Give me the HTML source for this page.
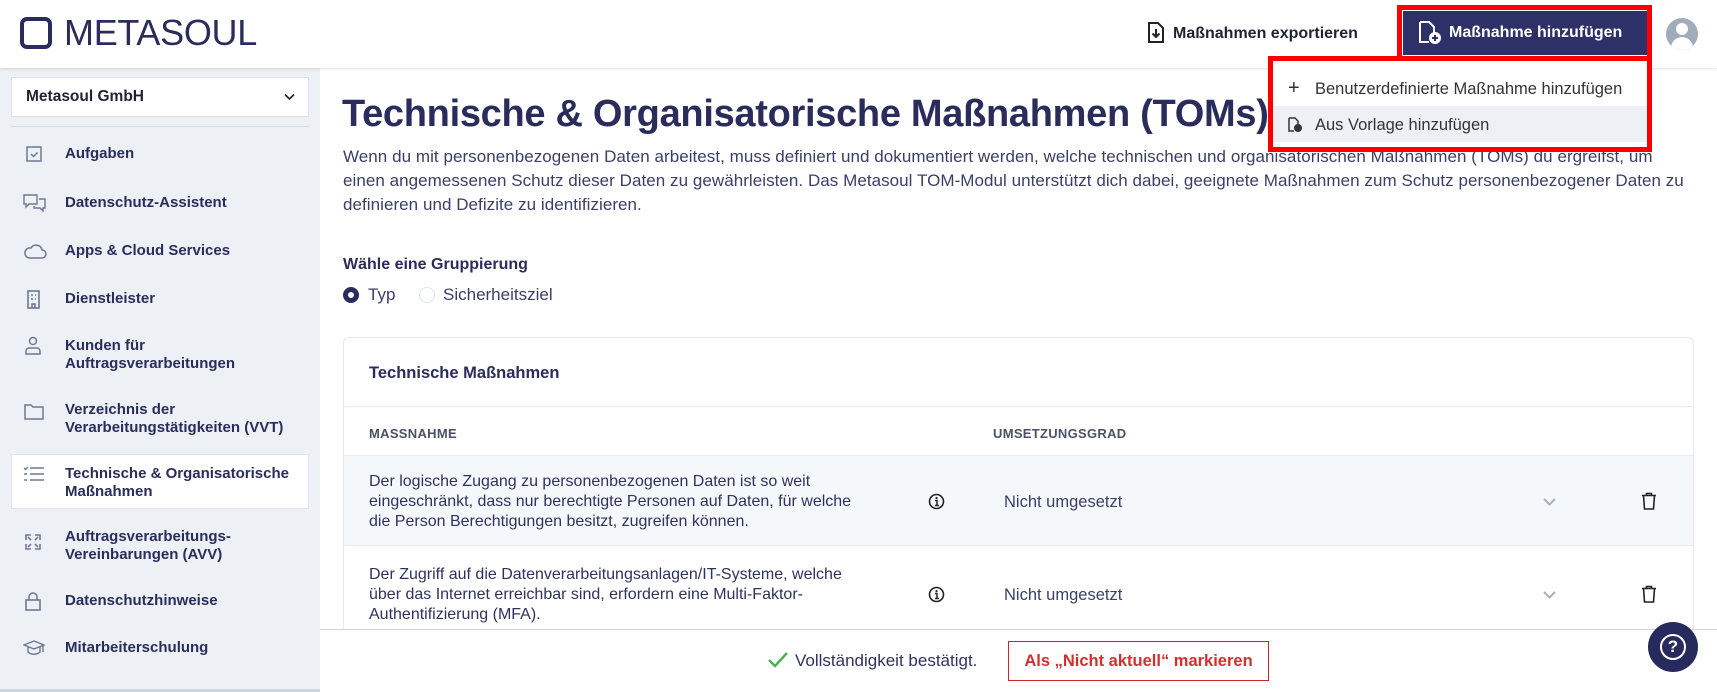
<!DOCTYPE html>
<html><head><meta charset="utf-8"><style>
*{box-sizing:border-box;margin:0;padding:0}
html,body{width:1717px;height:692px;overflow:hidden}
body{position:relative;background:#fff;font-family:"Liberation Sans",sans-serif;color:#2a2d5c}
.a{position:absolute;white-space:nowrap}
.b{font-weight:bold}
.side{position:absolute;left:0;top:68px;width:320px;height:624px;background:#edf1f6}
.nav{position:absolute;left:65px;font-size:15px;font-weight:bold;line-height:18px;color:#2a2d5c}
.ic{position:absolute;left:23px}
</style></head><body>
<!-- header -->
<div class="a" style="left:0;top:0;width:1717px;height:68px;background:#fff;box-shadow:0 1px 3px rgba(0,0,0,.12);z-index:2"></div>
<div class="a" style="left:20px;top:17px;width:32px;height:32px;border:4px solid #2a2d5c;border-radius:7px;z-index:3"></div>
<div class="a" style="left:64px;top:13px;font-size:36px;line-height:40px;color:#2a2d5c;z-index:3;letter-spacing:-0.3px">METASOUL</div>
<svg class="a" style="left:1147px;top:22px;z-index:3" width="18" height="21" viewBox="0 0 18 21"><path d="M2 1h9l5 5v14H2z" fill="none" stroke="#222" stroke-width="2"/><path d="M9 7v8M5.5 11.5L9 15l3.5-3.5" fill="none" stroke="#222" stroke-width="2"/></svg>
<div class="a b" style="left:1173px;top:24px;font-size:16px;line-height:20px;color:#1f2233;z-index:3">Maßnahmen exportieren</div>
<div class="a" style="left:1397px;top:5px;width:255px;height:56px;border:5px solid #f00;z-index:3;background:#fff"></div>
<div class="a" style="left:1403px;top:11px;width:244px;height:44px;background:#2e3167;z-index:4"></div>
<svg class="a" style="left:1418px;top:21px;z-index:5" width="26" height="24" viewBox="0 0 26 24"><path d="M2 1h9l5 5v6M11 21H2V1" fill="none" stroke="#fff" stroke-width="2"/><circle cx="17" cy="17" r="6" fill="#fff"/><path d="M17 14v6M14 17h6" stroke="#2e3167" stroke-width="2"/></svg>
<div class="a b" style="left:1449px;top:23px;font-size:16px;line-height:20px;color:#fff;z-index:5">Maßnahme hinzufügen</div>
<div class="a" style="left:1666px;top:18px;width:32px;height:32px;border-radius:50%;background:#a2abba;z-index:3;overflow:hidden">
 <div class="a" style="left:10px;top:5px;width:12px;height:12px;border-radius:50%;background:#fff"></div>
 <div class="a" style="left:5px;top:19px;width:22px;height:16px;border-radius:11px 11px 0 0;background:#fff"></div>
</div>
<!-- dropdown -->
<div class="a" style="left:1268px;top:56px;width:384px;height:96px;border:5px solid #f00;background:#fff;z-index:3"></div>
<div class="a" style="left:1273px;top:106px;width:374px;height:36px;background:#edf1f5;z-index:4"></div>
<div class="a" style="left:1288px;top:76px;font-size:20px;line-height:24px;color:#333;z-index:5">+</div>
<div class="a" style="left:1315px;top:79px;font-size:16.5px;line-height:20px;color:#333;z-index:5">Benutzerdefinierte Maßnahme hinzufügen</div>
<svg class="a" style="left:1287px;top:117px;z-index:5" width="16" height="16" viewBox="0 0 16 16"><path d="M2 1h6l3 3v3M7 14H2V1" fill="none" stroke="#333" stroke-width="1.5"/><circle cx="11" cy="11" r="4" fill="#333"/></svg>
<div class="a" style="left:1315px;top:115px;font-size:16.5px;line-height:20px;color:#333;z-index:5">Aus Vorlage hinzufügen</div>

<!-- sidebar -->
<div class="side"></div>
<div class="a" style="left:11px;top:77px;width:298px;height:40px;background:#fff;border:1px solid #dde3ea"></div>
<div class="a b" style="left:26px;top:88px;font-size:15.5px;line-height:18px;color:#1f2233">Metasoul GmbH</div>
<svg class="a" style="left:284px;top:93px" width="11" height="8" viewBox="0 0 11 8"><path d="M1 1.5l4.5 4.5 4.5-4.5" fill="none" stroke="#222" stroke-width="1.6"/></svg>
<div class="a" style="left:11px;top:126px;width:298px;height:1px;background:#d7dde5"></div>
<div class="a" style="left:11px;top:454px;width:298px;height:55px;background:#fff;border:1px solid #e0e5eb"></div>

<svg class="ic" style="top:146px" width="20" height="18" viewBox="0 0 20 18"><rect x="4" y="1" width="14" height="14" fill="none" stroke="#6f7890" stroke-width="1.5"/><path d="M8 8l2.5 2.5 4-4" fill="none" stroke="#6f7890" stroke-width="1.5"/></svg>
<div class="nav" style="top:145px">Aufgaben</div>
<svg class="ic" style="top:194px" width="24" height="18" viewBox="0 0 24 18"><path d="M1 1h13v9H6l-3 3v-3H1z M16 5h6v9h-2v3l-3-3h-6v-2" fill="none" stroke="#6f7890" stroke-width="1.4"/></svg>
<div class="nav" style="top:194px">Datenschutz-Assistent</div>
<svg class="ic" style="top:243px" width="24" height="16" viewBox="0 0 24 16"><path d="M6 15h13a4 4 0 0 0 0-8 6 6 0 0 0-11-2 5 5 0 0 0-2 10z" fill="none" stroke="#6f7890" stroke-width="1.5"/></svg>
<div class="nav" style="top:242px">Apps &amp; Cloud Services</div>
<svg class="ic" style="top:290px" width="20" height="20" viewBox="0 0 20 20"><rect x="5" y="1" width="11" height="17" fill="none" stroke="#6f7890" stroke-width="1.6"/><path d="M8 5h2M12 5h1M8 9h2M12 9h1M9 18v-4h3v4" stroke="#6f7890" stroke-width="1.6" fill="none"/></svg>
<div class="nav" style="top:290px">Dienstleister</div>
<svg class="ic" style="top:336px" width="20" height="20" viewBox="0 0 20 20"><circle cx="10" cy="5" r="3.5" fill="none" stroke="#6f7890" stroke-width="1.5"/><path d="M3 18v-3a3 3 0 0 1 3-3h8a3 3 0 0 1 3 3v3z" fill="none" stroke="#6f7890" stroke-width="1.5"/></svg>
<div class="nav" style="top:337px">Kunden für<br>Auftragsverarbeitungen</div>
<svg class="ic" style="top:403px" width="22" height="18" viewBox="0 0 22 18"><path d="M2 2h6l2 2h10v12H2z" fill="none" stroke="#6f7890" stroke-width="1.5"/></svg>
<div class="nav" style="top:401px">Verzeichnis der<br>Verarbeitungstätigkeiten (VVT)</div>
<svg class="ic" style="top:465px" width="22" height="18" viewBox="0 0 22 18"><path d="M1 3l1.5 1.5L5 2M7 3h14M1 9h3M7 9h14M1 15h3M7 15h14" fill="none" stroke="#6f7890" stroke-width="1.4"/></svg>
<div class="nav" style="top:465px">Technische &amp; Organisatorische<br>Maßnahmen</div>
<svg class="ic" style="top:532px" width="20" height="20" viewBox="0 0 20 20"><path d="M3 8V3h5M12 3h5v5M17 12v5h-5M8 17H3v-5M5 5l3 3M15 5l-3 3M15 15l-3-3M5 15l3-3" fill="none" stroke="#6f7890" stroke-width="1.6"/></svg>
<div class="nav" style="top:528px">Auftragsverarbeitungs-<br>Vereinbarungen (AVV)</div>
<svg class="ic" style="top:591px" width="20" height="20" viewBox="0 0 20 20"><rect x="3" y="9" width="14" height="10" fill="none" stroke="#6f7890" stroke-width="1.6"/><path d="M6 9V6a4 4 0 0 1 8 0v3" fill="none" stroke="#6f7890" stroke-width="1.6"/></svg>
<div class="nav" style="top:592px">Datenschutzhinweise</div>
<svg class="ic" style="top:639px" width="22" height="18" viewBox="0 0 22 18"><path d="M1 6l10-4 10 4-10 4zM5 8v5c3 3 9 3 12 0V8M20 7v6" fill="none" stroke="#6f7890" stroke-width="1.4"/></svg>
<div class="nav" style="top:639px">Mitarbeiterschulung</div>
<div class="a" style="left:0;top:689px;width:320px;height:3px;background:#d0d6de"></div>

<!-- main -->
<div class="a b" style="left:342px;top:92px;font-size:38px;line-height:44px;letter-spacing:-0.3px;color:#2a2d5c">Technische &amp; Organisatorische Maßnahmen (TOMs)</div>
<div class="a" style="left:343px;top:145px;font-size:17px;line-height:24px;color:#3b3e66;letter-spacing:0.05px">Wenn du mit personenbezogenen Daten arbeitest, muss definiert und dokumentiert werden, welche technischen und organisatorischen Maßnahmen (TOMs) du ergreifst, um<br>einen angemessenen Schutz dieser Daten zu gewährleisten. Das Metasoul TOM-Modul unterstützt dich dabei, geeignete Maßnahmen zum Schutz personenbezogener Daten zu<br>definieren und Defizite zu identifizieren.</div>
<div class="a b" style="left:343px;top:255px;font-size:16px;line-height:20px">Wähle eine Gruppierung</div>
<div class="a" style="left:343px;top:287px;width:16px;height:16px;border-radius:50%;border:5px solid #2a2d5c"></div>
<div class="a" style="left:368px;top:285px;font-size:17px;line-height:20px;color:#3b3e66">Typ</div>
<div class="a" style="left:419px;top:287px;width:16px;height:16px;border-radius:50%;border:1.5px solid #dde3ea"></div>
<div class="a" style="left:443px;top:285px;font-size:17px;line-height:20px;color:#3b3e66">Sicherheitsziel</div>

<div class="a" style="left:343px;top:337px;width:1351px;height:355px;border:1px solid #e6eaef;border-bottom:none;border-radius:6px 6px 0 0;background:#fff"></div>
<div class="a b" style="left:369px;top:363px;font-size:16.5px;line-height:20px">Technische Maßnahmen</div>
<div class="a" style="left:344px;top:406px;width:1349px;height:1px;background:#e8ecf0"></div>
<div class="a b" style="left:369px;top:426px;font-size:13px;line-height:16px;color:#4b5068;letter-spacing:0.3px">MASSNAHME</div>
<div class="a b" style="left:993px;top:426px;font-size:13px;line-height:16px;color:#4b5068;letter-spacing:0.3px">UMSETZUNGSGRAD</div>
<div class="a" style="left:344px;top:455px;width:1349px;height:91px;background:#f5f8fb;border-top:1px solid #e8ecf0;border-bottom:1px solid #e8ecf0"></div>

<div class="a" style="left:369px;top:472px;font-size:16px;line-height:20px;color:#2f3260">Der logische Zugang zu personenbezogenen Daten ist so weit<br>eingeschränkt, dass nur berechtigte Personen auf Daten, für welche<br>die Person Berechtigungen besitzt, zugreifen können.</div>
<svg class="a" style="left:928px;top:493px" width="17" height="17" viewBox="0 0 17 17"><circle cx="8.5" cy="8.5" r="7" fill="none" stroke="#222" stroke-width="1.6"/><circle cx="8.5" cy="5" r="1.1" fill="#222"/><path d="M7 7.5h2v5M7 12.5h4" stroke="#222" stroke-width="1.5" fill="none"/></svg>
<div class="a" style="left:1004px;top:492px;font-size:16.5px;line-height:20px;color:#3b3e66">Nicht umgesetzt</div>
<svg class="a" style="left:1543px;top:498px" width="13" height="8" viewBox="0 0 13 8"><path d="M1 1l5.5 5.5L12 1" fill="none" stroke="#a7b0c0" stroke-width="2"/></svg>
<svg class="a" style="left:1641px;top:492px" width="16" height="18" viewBox="0 0 16 18"><path d="M1 3.5h14M5.5 3.5V1.5h5v2M2.5 3.5l1 13.5h9l1-13.5" fill="none" stroke="#222" stroke-width="1.6"/></svg>

<div class="a" style="left:369px;top:565px;font-size:16px;line-height:20px;color:#2f3260">Der Zugriff auf die Datenverarbeitungsanlagen/IT-Systeme, welche<br>über das Internet erreichbar sind, erfordern eine Multi-Faktor-<br>Authentifizierung (MFA).</div>
<svg class="a" style="left:928px;top:586px" width="17" height="17" viewBox="0 0 17 17"><circle cx="8.5" cy="8.5" r="7" fill="none" stroke="#222" stroke-width="1.6"/><circle cx="8.5" cy="5" r="1.1" fill="#222"/><path d="M7 7.5h2v5M7 12.5h4" stroke="#222" stroke-width="1.5" fill="none"/></svg>
<div class="a" style="left:1004px;top:585px;font-size:16.5px;line-height:20px;color:#3b3e66">Nicht umgesetzt</div>
<svg class="a" style="left:1543px;top:591px" width="13" height="8" viewBox="0 0 13 8"><path d="M1 1l5.5 5.5L12 1" fill="none" stroke="#a7b0c0" stroke-width="2"/></svg>
<svg class="a" style="left:1641px;top:585px" width="16" height="18" viewBox="0 0 16 18"><path d="M1 3.5h14M5.5 3.5V1.5h5v2M2.5 3.5l1 13.5h9l1-13.5" fill="none" stroke="#222" stroke-width="1.6"/></svg>

<!-- footer -->
<div class="a" style="left:320px;top:629px;width:1397px;height:63px;background:#fff;border-top:1px solid #cfd5dd"></div>
<svg class="a" style="left:767px;top:651px" width="22" height="18" viewBox="0 0 22 18"><path d="M2 9l6 6L20 2" fill="none" stroke="#4caf50" stroke-width="2.4"/></svg>
<div class="a" style="left:795px;top:651px;font-size:17px;line-height:20px;color:#2f3260">Vollständigkeit bestätigt.</div>
<div class="a" style="left:1008px;top:641px;width:261px;height:40px;border:1px solid #c62828;background:#fff"></div>
<div class="a b" style="left:1008px;top:651px;width:261px;text-align:center;font-size:16.5px;line-height:20px;color:#d32f2f">Als „Nicht aktuell“ markieren</div>
<div class="a" style="left:1648px;top:622px;width:50px;height:50px;border-radius:50%;background:#272a5c"></div>
<div class="a b" style="left:1660px;top:634px;width:26px;height:26px;border:2.5px solid #fff;border-radius:50%;color:#fff;font-size:17px;line-height:21px;text-align:center">?</div>
</body></html>
